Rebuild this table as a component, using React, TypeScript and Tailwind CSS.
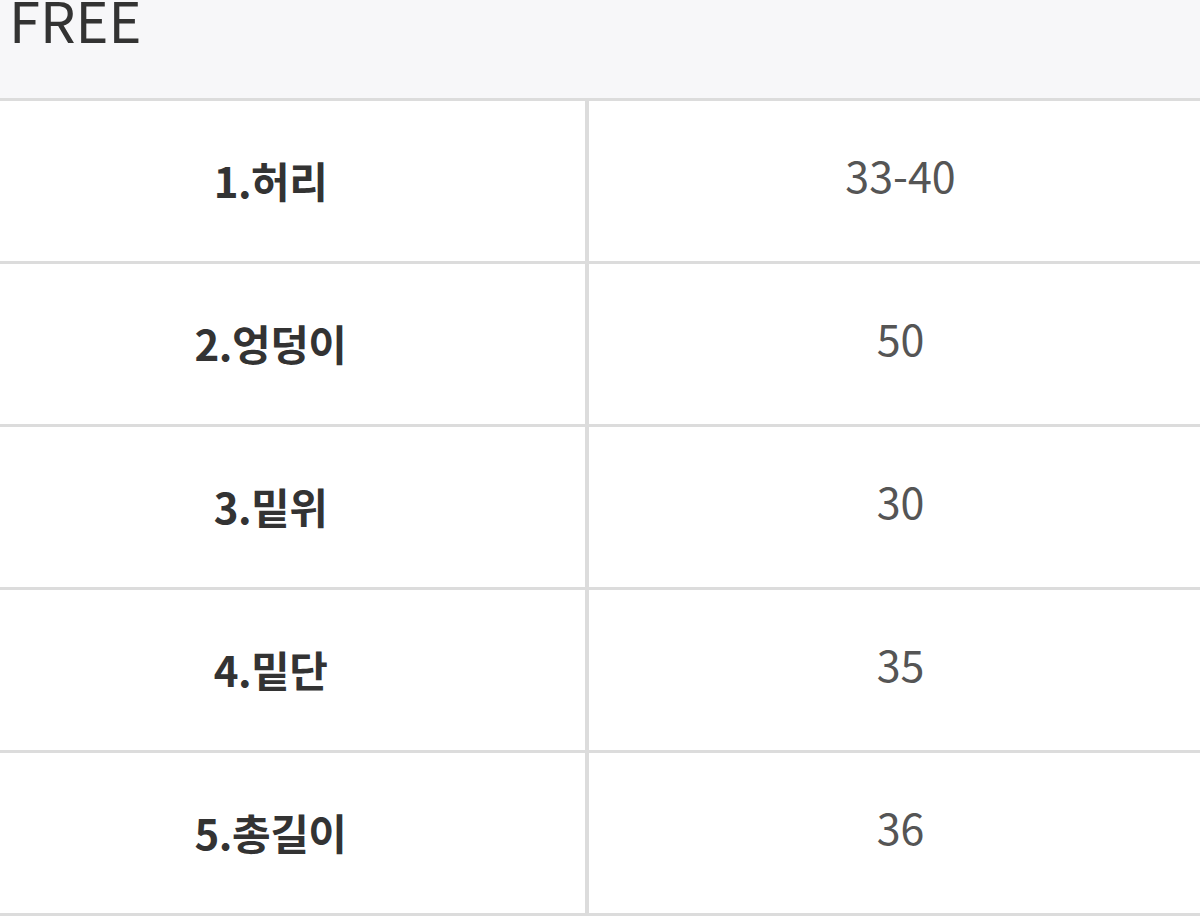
const rows = [
  { label: "1.허리", value: "33-40" },
  { label: "2.엉덩이", value: "50" },
  { label: "3.밑위", value: "30" },
  { label: "4.밑단", value: "35" },
  { label: "5.총길이", value: "36" },
];

export default function App() {
  return (
    <div
      className="w-[1200px] h-[923px] bg-white overflow-hidden"
      style={{ fontFamily: '"Noto Sans CJK KR", "Noto Sans", sans-serif' }}
    >
      {/* size header */}
      <div className="flex items-start h-[101px] bg-[#f7f7f9] border-b-[3px] border-[#dcdcdc] pl-[9px]">
        <div className="text-[56px] leading-[38px] text-[#333]">FREE</div>
      </div>

      {rows.map((r) => (
        <div key={r.label} className="flex h-[163px] border-b-[3px] border-[#dcdcdc]">
          <div className="w-[589px] border-r-[4px] border-[#dcdcdc] flex items-center justify-center pr-[44px] pb-[4px]">
            <span className="text-[42px] font-bold text-[#333] tracking-[-0.5px]">{r.label}</span>
          </div>
          <div className="flex-1 flex items-center justify-center pl-[12px] pb-[14px]">
            <span className="text-[43px] text-[#555]">{r.value}</span>
          </div>
        </div>
      ))}
    </div>
  );
}
